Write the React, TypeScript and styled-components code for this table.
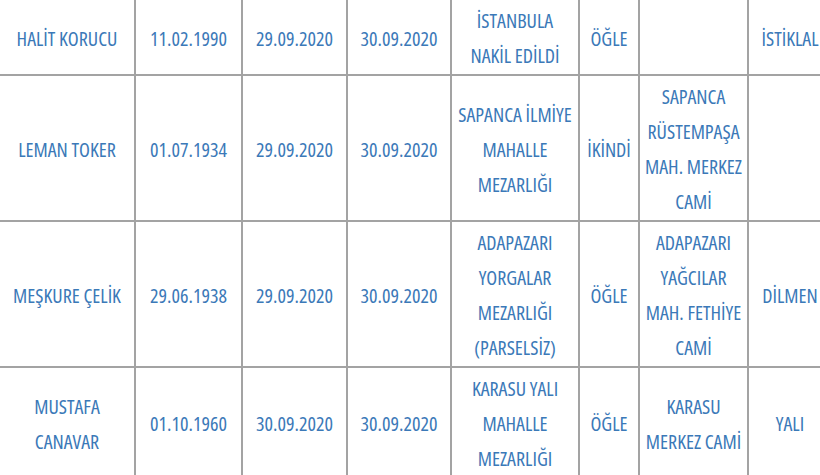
import React from 'react'
import styled, { createGlobalStyle } from 'styled-components'

const GlobalStyle = createGlobalStyle`
  html, body {
    margin: 0;
    padding: 0;
    background: #fff;
    overflow: hidden;
  }
  body {
    font-family: "Open Sans", "Liberation Sans", sans-serif;
  }
`

type Row = string[][]

const rows: Row[] = [
  [['HALİT KORUCU'], ['11.02.1990'], ['29.09.2020'], ['30.09.2020'], ['İSTANBULA', 'NAKİL EDİLDİ'], ['ÖĞLE'], [], ['İSTİKLAL']],
  [['LEMAN TOKER'], ['01.07.1934'], ['29.09.2020'], ['30.09.2020'], ['SAPANCA İLMİYE', 'MAHALLE', 'MEZARLIĞI'], ['İKİNDİ'], ['SAPANCA', 'RÜSTEMPAŞA', 'MAH. MERKEZ', 'CAMİ'], []],
  [['MEŞKURE ÇELİK'], ['29.06.1938'], ['29.09.2020'], ['30.09.2020'], ['ADAPAZARI', 'YORGALAR', 'MEZARLIĞI', '(PARSELSİZ)'], ['ÖĞLE'], ['ADAPAZARI', 'YAĞCILAR', 'MAH. FETHİYE', 'CAMİ'], ['DİLMEN']],
  [['MUSTAFA', 'CANAVAR'], ['01.10.1960'], ['30.09.2020'], ['30.09.2020'], ['KARASU YALI', 'MAHALLE', 'MEZARLIĞI'], ['ÖĞLE'], ['KARASU', 'MERKEZ CAMİ'], ['YALI']],
]

const widths = [136, 107, 105, 104, 128, 60, 109, 84]

const App: React.FC = () => {
  return (
    <>
      <GlobalStyle />
      <Table>
        <colgroup>
          {widths.map((w, i) => <col key={i} style={{ width: w }} />)}
        </colgroup>
        <tbody>
          {rows.map((row, r) => (
            <tr key={r}>
              {row.map((lines, c) => (
                <Cell key={c}>
                  {lines.map((l, i) => <Line key={i}>{l}</Line>)}
                </Cell>
              ))}
            </tr>
          ))}
        </tbody>
      </Table>
    </>
  )
}

const Table = styled.table`
  border-collapse: collapse;
  table-layout: fixed;
  width: 833px;
  margin: -2px 0 0 -2px;
`

const Cell = styled.td`
  border: 2px solid #a3a3a3;
  padding: 3px 0 1px;
  text-align: center;
  vertical-align: middle;
  color: #3b79b8;
  font-size: 20px;
  font-stretch: 75%;
  line-height: 35px;
  white-space: nowrap;
  overflow: hidden;
`

const Line = styled.div`
  display: block;
`

export default App
